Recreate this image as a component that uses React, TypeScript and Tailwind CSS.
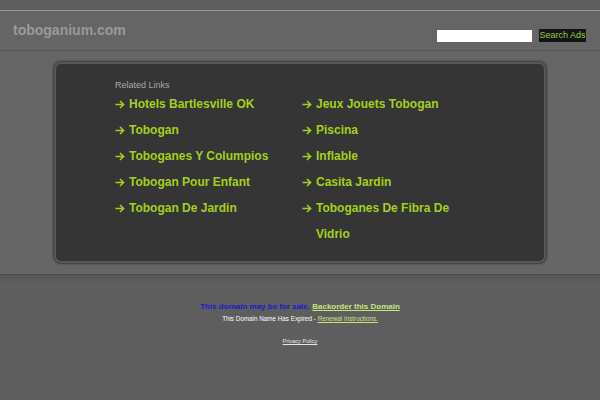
import React from "react";

const left = ["Hotels Bartlesville OK", "Tobogan", "Toboganes Y Columpios", "Tobogan Pour Enfant", "Tobogan De Jardin"];
const right = ["Jeux Jouets Tobogan", "Piscina", "Inflable", "Casita Jardin", "Toboganes De Fibra De Vidrio"];

function Arrow() {
  return (
    <span className="flex h-[26px] w-[14px] shrink-0 items-center">
      <svg width="10" height="9" viewBox="0 0 10 9" fill="none">
        <path d="M0.5 4.5H8.5M5 1L8.6 4.5L5 8" stroke="#a3d11b" strokeWidth="1.6" />
      </svg>
    </span>
  );
}

function LinkItem({ text }: { text: string }) {
  return (
    <li className="flex items-start">
      <Arrow />
      <a className="text-[12px] font-bold leading-[26px] text-[#a3d11b]">{text}</a>
    </li>
  );
}

export default function App() {
  return (
    <div className="flex min-h-[400px] w-full flex-col bg-[#5e5e5e]" style={{ fontFamily: '"Liberation Sans", Arial, sans-serif' }}>
      <div className="h-[10px] bg-[#5f5f5f]" />
      <div className="h-px bg-[#9a9a9a]" />
      <header className="flex h-[40px] items-start justify-between border-b border-[#555555] bg-[#656565] pl-[13px] pr-[14px]">
        <div className="pt-[10px] text-[14px] font-bold leading-[18px] text-[#9a9a9a]">toboganium.com</div>
        <div className="flex items-center gap-[7px] pt-[18px]">
          <div className="h-[12px] w-[95px] bg-white" />
          <div className="flex h-[13px] w-[47px] items-center justify-center bg-[#141414] text-[9px] leading-none text-[#9ccc4a]">
            Search Ads
          </div>
        </div>
      </header>
      <section className="bg-[#666666] px-[54px] pt-[11px] pb-[11px]">
        <div className="rounded-[7px] border-2 border-[#575757] bg-[#353535] pt-[15px] pb-[14px] pl-[59px] shadow-[0_0_2px_1px_#3a3a3a]">
          <div className="text-[9px] leading-[12px] text-[#a8a8a8]">Related Links</div>
          <div className="grid grid-cols-[187px_170px]">
            <ul>
              {left.map((t) => (
                <LinkItem key={t} text={t} />
              ))}
            </ul>
            <ul>
              {right.map((t) => (
                <LinkItem key={t} text={t} />
              ))}
            </ul>
          </div>
        </div>
      </section>
      <footer className="flex flex-1 flex-col items-center border-t border-[#4c4c4c] bg-[linear-gradient(#555555,#5e5e5e_8px,#5e5e5e)] pt-[27px]">
        <div className="text-[8px] font-bold leading-[10px]">
          <span className="text-[#1a1ad2]">This domain may be for sale. </span>
          <a className="text-[#c6e67a] underline">Backorder this Domain</a>
        </div>
        <div className="mt-[2px] text-[6.3px] leading-[9px] text-white">
          This Domain Name Has Expired - <a className="text-[#c6e67a] underline">Renewal Instructions.</a>
        </div>
        <div className="mt-[14px] text-[5.6px] leading-[8px] text-[#e8e8e8] underline">Privacy Policy</div>
      </footer>
    </div>
  );
}
